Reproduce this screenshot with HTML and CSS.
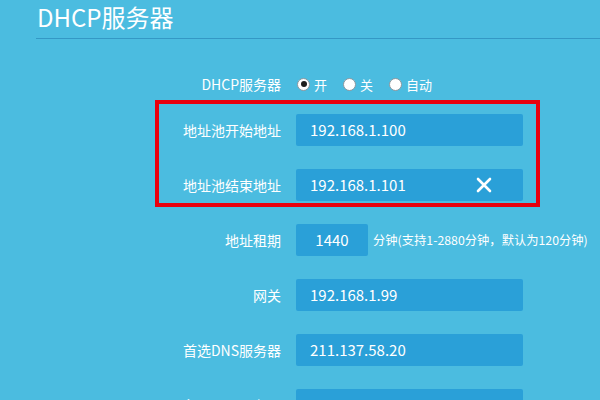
FILE: index.html
```html
<!DOCTYPE html>
<html lang="zh-CN">
<head>
    <meta charset="UTF-8">
    <title>DHCP服务器</title>
    <link rel="stylesheet" href="styles.css">
</head>
<body>
    <div class="page">
        <div class="header">
            <h1>DHCP服务器</h1>
        </div>
        <div class="form">
            <div class="row row-radio">
                <label class="label">DHCP服务器</label>
                <div class="radios">
                    <span class="radio checked"></span><span class="radio-text">开</span>
                    <span class="radio"></span><span class="radio-text">关</span>
                    <span class="radio"></span><span class="radio-text">自动</span>
                </div>
            </div>
            <div class="row">
                <label class="label">地址池开始地址</label>
                <div class="input">192.168.1.100</div>
            </div>
            <div class="row">
                <label class="label">地址池结束地址</label>
                <div class="input">192.168.1.101
                    <svg class="clear" width="16" height="16" viewBox="0 0 16 16">
                        <path d="M2 2 L14 14 M14 2 L2 14" stroke="#fff" stroke-width="2.6" stroke-linecap="round"/>
                    </svg>
                </div>
            </div>
            <div class="row">
                <label class="label">地址租期</label>
                <div class="input input-short">1440</div>
                <span class="hint">分钟(支持1-2880分钟，默认为120分钟)</span>
            </div>
            <div class="row">
                <label class="label">网关</label>
                <div class="input">192.168.1.99</div>
            </div>
            <div class="row">
                <label class="label">首选DNS服务器</label>
                <div class="input">211.137.58.20</div>
            </div>
            <div class="row">
                <label class="label">备用DNS服务器</label>
                <div class="input"></div>
            </div>
        </div>
        <div class="highlight"></div>
    </div>
</body>
</html>
```

FILE: styles.css
```css
body {
    margin: 0;
    background-color: #4bbce0;
    font-family: "Microsoft YaHei", "Noto Sans CJK SC", "Noto Sans", sans-serif;
    color: #fff;
    overflow: hidden;
}
.page {
    position: relative;
    height: 400px;
}
.header {
    margin-left: 36px;
    height: 38px;
    border-bottom: 1px solid #3498c5;
}
h1 {
    margin: 0;
    padding-left: 1px;
    padding-top: 1px;
    font-size: 24px;
    font-weight: normal;
    line-height: 32px;
}
.form {
    padding-top: 29px;
}
.row {
    display: flex;
    align-items: center;
    height: 32px;
    margin-bottom: 23px;
}
.row-radio {
    margin-bottom: 14px;
}
.label {
    width: 281px;
    padding-right: 15px;
    text-align: right;
    font-size: 14px;
    box-sizing: content-box;
}
.radios {
    display: flex;
    align-items: center;
    font-size: 13px;
}
.radio {
    width: 13px;
    height: 13px;
    border-radius: 50%;
    background: #fff;
    border: 1px solid #8c979e;
    box-sizing: border-box;
    margin-left: 1px;
    margin-right: 4px;
    position: relative;
}
.radio.checked::after {
    content: "";
    position: absolute;
    left: 2.5px;
    top: 2.5px;
    width: 6px;
    height: 6px;
    border-radius: 50%;
    background: #1e1e1e;
}
.radio-text {
    margin-right: 15px;
}
.input {
    width: 227px;
    height: 32px;
    box-sizing: border-box;
    background: #2aa0d8;
    border-radius: 2px;
    padding-left: 14px;
    font-size: 15px;
    line-height: 32px;
    display: flex;
    align-items: center;
    justify-content: space-between;
}
.input-short {
    width: 72px;
    padding-left: 0;
    justify-content: center;
}
.clear {
    margin-right: 31px;
}
.hint {
    margin-left: 5px;
    font-size: 12.3px;
}
.highlight {
    position: absolute;
    left: 155px;
    top: 100px;
    width: 385px;
    height: 107px;
    box-sizing: border-box;
    border: 4px solid #e8000d;
}
```
